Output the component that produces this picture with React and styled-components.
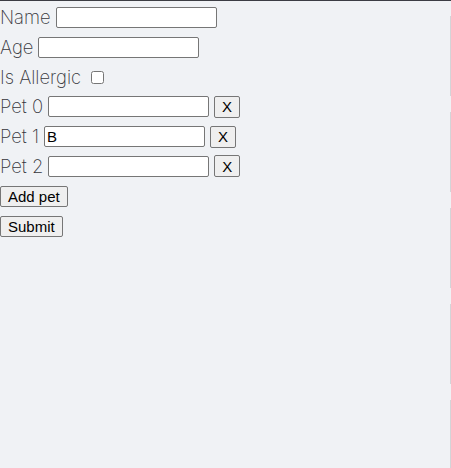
import React from "react";
import styled, { createGlobalStyle } from "styled-components";

const Global = createGlobalStyle`
  html, body { margin: 0; padding: 0; }
  body {
    background-color: #f0f2f5;
    background-image: repeating-linear-gradient(to bottom, transparent 0 16px, #d3d4d7 16px 96px);
    background-size: 1px 100%;
    background-position: right top;
    background-repeat: no-repeat;
    min-height: 468px;
    border-top: 1px solid #3c3d44;
    box-sizing: border-box;
    font-family: Inter, "Noto Sans", sans-serif;
  }
`;

const Form = styled.form`
  display: flex;
  flex-direction: column;
  padding-top: 1.6px;
`;

const Row = styled.div`
  display: flex;
  align-items: center;
  height: 29.8px;
  gap: 5px;
`;

const Label = styled.label`
  font-family: Inter, "Noto Sans", sans-serif;
  font-weight: 200;
  font-size: 18.4px;
  color: #36363c;
  line-height: 21px;
`;

const TextInput = styled.input`
  font-family: "Liberation Sans", Arial, sans-serif;
  font-size: 15px;
  width: 161px;
  height: 21px;
  box-sizing: border-box;
  margin: 0;
  background: #fff;
  border: 1px solid #767676;
  border-radius: 2px;
  padding: 1px 2px;
`;

const Check = styled.input`
  margin: 0 0 0 5px;
  width: 13px;
  height: 13px;
`;

const Button = styled.button`
  font-family: "Liberation Sans", Arial, sans-serif;
  font-size: 15px;
  line-height: 17px;
  height: ${(p) => (p.$tall ? 22 : 21)}px;
  box-sizing: border-box;
  margin: 0;
  padding: 1px 7px;
  background: #efefef;
  color: #000;
  border: 1px solid #767676;
  border-radius: 2px;
`;

const pets = ["", "B", ""];

export default function App() {
  return (
    <>
      <Global />
      <Form onSubmit={(e) => e.preventDefault()}>
        <Row>
          <Label>Name</Label>
          <TextInput type="text" />
        </Row>
        <Row>
          <Label>Age</Label>
          <TextInput type="text" />
        </Row>
        <Row>
          <Label>Is Allergic</Label>
          <Check type="checkbox" />
        </Row>
        {pets.map((v, i) => (
          <Row key={i}>
            <Label>Pet {i}</Label>
            <TextInput type="text" defaultValue={v} />
            <Button type="button" $tall>X</Button>
          </Row>
        ))}
        <Row>
          <Button type="button">Add pet</Button>
        </Row>
        <Row>
          <Button type="submit">Submit</Button>
        </Row>
      </Form>
    </>
  );
}
